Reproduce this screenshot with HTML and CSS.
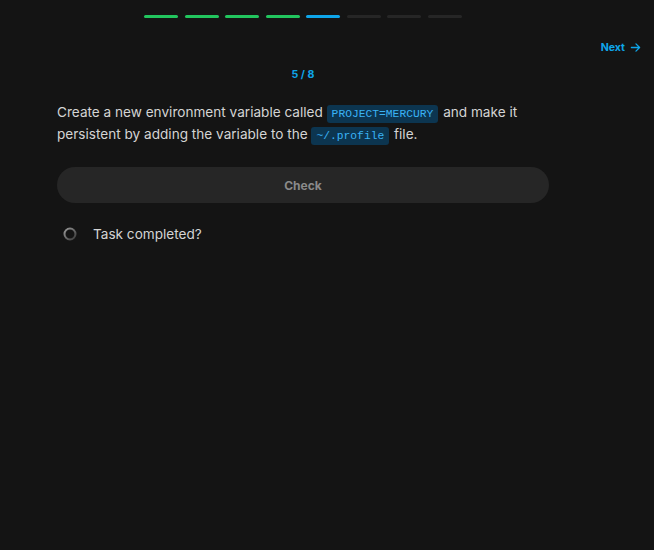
FILE: index.html
```html
<!DOCTYPE html>
<html>
<head>
<meta charset="utf-8">
<link rel="stylesheet" href="styles.css">
</head>
<body>
<div class="page">
  <div class="progress">
    <span class="seg done"></span>
    <span class="seg done"></span>
    <span class="seg done"></span>
    <span class="seg done"></span>
    <span class="seg current"></span>
    <span class="seg"></span>
    <span class="seg"></span>
    <span class="seg"></span>
  </div>
  <div class="nav">
    <a class="next" href="#">Next
      <svg width="11" height="11" viewBox="0 0 12 12" fill="none" stroke="currentColor" stroke-width="1.4" stroke-linecap="round" stroke-linejoin="round"><path d="M1.5 6h9M6.5 2L10.5 6l-4 4"/></svg>
    </a>
  </div>
  <div class="content">
    <div class="counter">5 / 8</div>
    <p class="task">Create a new environment variable called <code>PROJECT=MERCURY</code> and make it persistent by adding the variable to the <code>~/.profile</code> file.</p>
    <button class="check">Check</button>
    <div class="status">
      <svg class="ring" width="14" height="14" viewBox="0 0 14 14">
        <defs>
          <linearGradient id="g" x1="0" y1="0" x2="1" y2="1">
            <stop offset="0" stop-color="#9a9a9a"/>
            <stop offset="1" stop-color="#3a3a3a"/>
          </linearGradient>
        </defs>
        <circle cx="7" cy="7" r="5.5" fill="none" stroke="url(#g)" stroke-width="2"/>
      </svg>
      <span>Task completed?</span>
    </div>
  </div>
</div>
</body>
</html>
```

FILE: styles.css
```css
html, body {
  margin: 0;
  padding: 0;
  background: #141414;
  height: 100%;
}
body {
  font-family: Inter, "Noto Sans", sans-serif;
  color: #d4d4d4;
}
.page {
  padding-top: 15px;
}
.progress {
  width: 318px;
  margin-left: 144px;
  display: flex;
  gap: 6.6px;
}
.seg {
  flex: 1;
  height: 3px;
  border-radius: 2px;
  background: #262626;
}
.seg.done { background: #22c55e; }
.seg.current { background: #0ea5e9; }
.nav {
  display: flex;
  justify-content: flex-end;
  padding-right: 13px;
  margin-top: 22px;
  height: 15px;
}
.next {
  display: flex;
  align-items: center;
  gap: 5px;
  color: #0ea5e9;
  font-size: 10.6px;
  font-weight: 700;
  text-decoration: none;
  line-height: 15px;
}
.content {
  width: 492px;
  margin-left: 57px;
}
.counter {
  margin-top: 12px;
  text-align: center;
  color: #0ea5e9;
  font-size: 10.6px;
  font-weight: 700;
  line-height: 15px;
}
.task {
  margin: 19px 0 0;
  font-size: 13.6px;
  line-height: 22px;
  color: #d4d4d4;
}
code {
  font-family: "Liberation Mono", monospace;
  font-size: 11.3px;
  line-height: 1;
  background: #0c3550;
  color: #3ab2f5;
  padding: 3px 5px;
  margin: 0 1px 0 0;
  border-radius: 3px;
}
.check {
  display: block;
  width: 100%;
  height: 36px;
  margin-top: 22px;
  border: none;
  border-radius: 18px;
  background: #262626;
  color: #8a8a8a;
  font-family: Inter, "Noto Sans", sans-serif;
  font-size: 12px;
  font-weight: 700;
}
.status {
  display: flex;
  align-items: center;
  gap: 16px;
  margin-top: 22px;
  padding-left: 6px;
  font-size: 13.6px;
  color: #d4d4d4;
  line-height: 18px;
}
.ring { display: block; }
```
